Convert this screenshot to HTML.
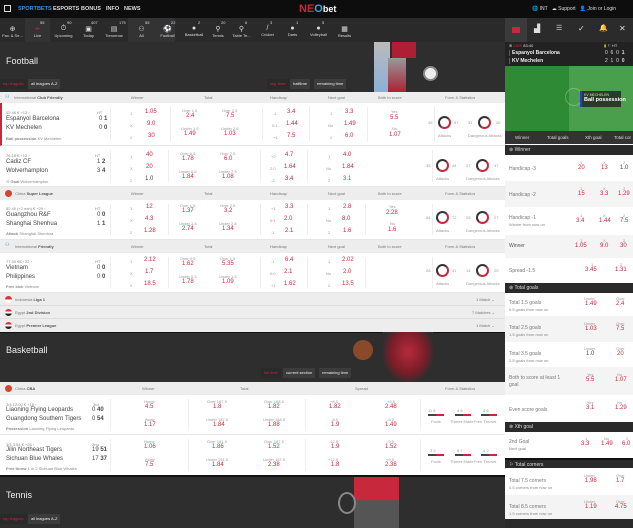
<!DOCTYPE html>
<html><head><meta charset="utf-8"><style>
*{margin:0;padding:0;box-sizing:border-box}
body{width:633px;height:528px;overflow:hidden;background:#fff;font-family:"Liberation Sans",sans-serif;position:relative;color:#444}
.a{position:absolute;white-space:nowrap}
.r{color:#c8283c}
.g{color:#999}
.t{font-size:4px;color:#888}
.o{font-size:6px;color:#c8283c}
.l{font-size:4px;color:#999}
.team{font-size:6px;color:#444}
.hdr{position:absolute;left:0;width:505px;height:13px;background:#ededed;font-size:5px;color:#777}
.row{position:absolute;left:0;width:505px;background:#fff;border-bottom:1px solid #e6e6e6}
.vl{position:absolute;top:4px;bottom:4px;width:1px;background:#eee}
.circ{position:absolute;width:13px;height:13px;border-radius:50%;border:2px solid #333;border-right-color:#c8283c;border-bottom-color:#c8283c}
.dark{position:absolute;left:0;width:505px;background:#2e2e2e}
.tab{position:absolute;height:10px;font-size:4px;line-height:10px;padding:0 3px;color:#eee;background:#3c3c3c}
.nav div.i{position:absolute;top:18px;height:24px;font-size:4px;color:#ddd;text-align:center}
.rp{position:absolute;left:505px;width:128px}
.rrow{position:absolute;left:505px;width:128px;font-size:5px;color:#777}
.rh{position:absolute;left:505px;width:128px;height:10px;background:#2a2a2a;color:#ddd;font-size:5px;line-height:10px;padding-left:4px}
.bar{position:absolute;height:2px;width:16px;background:linear-gradient(90deg,#444 50%,#c8283c 50%)}
</style></head><body>

<!-- top bar -->
<div class="a" style="left:0;top:0;width:633px;height:18px;background:#0d0d0d"></div>
<div class="a" style="left:4px;top:5px;width:7px;height:7px;border:1.5px solid #ddd"></div>
<div class="a" style="left:18px;top:6px;font-size:5.5px;font-weight:bold;color:#3a8fd6">SPORTBETS</div>
<div class="a" style="left:53px;top:6px;font-size:5.5px;font-weight:bold;color:#ddd">ESPORTS</div>
<div class="a" style="left:81px;top:6px;font-size:5.5px;font-weight:bold;color:#ddd">BONUS</div>
<div class="a" style="left:106px;top:6px;font-size:5.5px;font-weight:bold;color:#ddd">INFO</div>
<div class="a" style="left:124px;top:6px;font-size:5.5px;font-weight:bold;color:#ddd">NEWS</div>
<div class="a" style="left:299px;top:3px;font-size:11px;font-weight:bold;color:#c8283c">NE<span style="color:#3aa6e0">O</span><span style="color:#fff;font-size:9px">bet</span></div>
<div class="a" style="left:532px;top:6px;font-size:5px;color:#ddd">🌐 INT &nbsp; ☁ Support &nbsp; 👤 Join or Login</div>

<!-- nav -->
<div class="a" style="left:0;top:18px;width:505px;height:24px;background:#2a2a2a"></div>
<div class="a" style="left:25px;top:18px;width:25px;height:24px;background:#333"></div>
<div class="a" style="left:155px;top:18px;width:20px;height:24px;background:#333"></div>
<div class="a" style="left:128px;top:18px;width:27px;height:24px;background:#333"></div>
<div class="nav">
<div class="i" style="left:0;width:25px"><div style="font-size:7px;margin-top:7px">⊕</div>Fav. &amp; Se...</div>
<div class="i" style="left:25px;width:25px"><div style="font-size:6px;margin-top:8px;color:#c8283c">⟛</div>Live<span class="a" style="left:15px;top:2px">55</span></div>
<div class="i" style="left:50px;width:27px"><div style="font-size:7px;margin-top:7px">⏱</div>Upcoming<span class="a" style="left:17px;top:2px">90</span></div>
<div class="i" style="left:77px;width:23px"><div style="font-size:7px;margin-top:7px">▣</div>Today<span class="a" style="left:14px;top:2px">407</span></div>
<div class="i" style="left:100px;width:28px"><div style="font-size:7px;margin-top:7px">▤</div>Tomorrow<span class="a" style="left:19px;top:2px">175</span></div>
<div class="i" style="left:128px;width:27px"><div style="font-size:7px;margin-top:7px">⚇</div>All<span class="a" style="left:17px;top:2px">55</span></div>
<div class="i" style="left:155px;width:25px"><div style="font-size:7px;margin-top:7px;color:#c8283c">⚽</div>Football<span class="a" style="left:16px;top:2px">22</span></div>
<div class="i" style="left:180px;width:28px"><div style="font-size:7px;margin-top:7px">●</div>Basketball<span class="a" style="left:18px;top:2px">2</span></div>
<div class="i" style="left:208px;width:20px"><div style="font-size:7px;margin-top:7px">⚲</div>Tennis<span class="a" style="left:13px;top:2px">20</span></div>
<div class="i" style="left:228px;width:27px"><div style="font-size:7px;margin-top:7px">⚲</div>Table Te...<span class="a" style="left:17px;top:2px">6</span></div>
<div class="i" style="left:255px;width:25px"><div style="font-size:7px;margin-top:7px">/</div>Cricket<span class="a" style="left:15px;top:2px">3</span></div>
<div class="i" style="left:280px;width:25px"><div style="font-size:7px;margin-top:7px">●</div>Darts<span class="a" style="left:16px;top:2px">1</span></div>
<div class="i" style="left:305px;width:27px"><div style="font-size:7px;margin-top:7px">●</div>Volleyball<span class="a" style="left:17px;top:2px">5</span></div>
<div class="i" style="left:332px;width:25px"><div style="font-size:7px;margin-top:7px">▦</div>Results</div>
</div>

<!-- Football header -->
<div class="dark" style="top:42px;height:50px"></div>
<div class="a" style="left:374px;top:42px;width:16px;height:50px;background:linear-gradient(#bbb,#8ab0d8)"></div>
<div class="a" style="left:392px;top:42px;width:24px;height:16px;background:#b01e35"></div>
<div class="a" style="left:388px;top:58px;width:18px;height:34px;background:linear-gradient(#999,#aa2233)"></div>
<div class="a" style="left:423px;top:66px;width:15px;height:15px;border-radius:50%;background:#eee;border:2px solid #888"></div>
<div class="a" style="left:6px;top:56px;font-size:9px;color:#eee">Football</div>
<div class="tab" style="left:0;top:79px;color:#c8283c;background:#2a2a2a">top leagues</div>
<div class="tab" style="left:28px;top:79px">all leagues A-Z</div>
<div class="tab" style="left:267px;top:79px;color:#c8283c;background:#2a2a2a">reg. time</div>
<div class="tab" style="left:290px;top:79px">halftime</div>
<div class="tab" style="left:314px;top:79px">remaining time</div>

<!-- league header 1 -->
<div class="hdr" style="top:92px;height:11px">
<span class="a" style="left:5px;top:2px;color:#3a8fd6">⚇</span>
<span class="a" style="left:14px;top:3px;font-size:4px">International <b style="color:#555">Club Friendly</b></span>
<span class="a" style="left:131px;top:3px;font-size:4px">Winner</span>
<span class="a" style="left:204px;top:3px;font-size:4px">Total</span>
<span class="a" style="left:270px;top:3px;font-size:4px">Handicap</span>
<span class="a" style="left:328px;top:3px;font-size:4px">Next goal</span>
<span class="a" style="left:378px;top:3px;font-size:4px">Both to score</span>
<span class="a" style="left:445px;top:3px;font-size:4px">Form &amp; Statistics</span>
</div>

<!-- match 1 -->
<div class="row" style="top:103px;height:43px;border-left:2px solid #c8283c">
<span class="a t" style="left:4px;top:7px">02:46 € +13 ›</span>
<span class="a t" style="left:95px;top:7px">HT</span>
<span class="a team" style="left:4px;top:13px">Espanyol Barcelona</span><span class="a team" style="left:97px;top:13px">0 <b>1</b></span>
<span class="a team" style="left:4px;top:22px">KV Mechelen</span><span class="a team" style="left:97px;top:22px">0 <b>0</b></span>
<span class="a t" style="left:4px;top:33px"><b>Ball possession</b> KV Mechelen</span>
<div class="vl" style="left:108px"></div><div class="vl" style="left:168px"></div><div class="vl" style="left:260px"></div><div class="vl" style="left:307px"></div><div class="vl" style="left:365px"></div><div class="vl" style="left:432px"></div>
<span class="a l" style="left:128px;top:8px">1</span><span class="a o" style="left:143px;top:6px">1.05</span>
<span class="a l" style="left:128px;top:20px">X</span><span class="a o" style="left:145px;top:18px">9.0</span>
<span class="a l" style="left:128px;top:32px">2</span><span class="a o" style="left:146px;top:30px">30</span>
<span class="a l" style="left:180px;top:5px">Over 1.5</span><span class="a o" style="left:184px;top:10px">2.4</span>
<span class="a l" style="left:220px;top:5px">Over 2.5</span><span class="a o" style="left:224px;top:10px">7.5</span>
<span class="a l" style="left:179px;top:23px">Under 1.5</span><span class="a o" style="left:182px;top:28px">1.49</span>
<span class="a l" style="left:219px;top:23px">Under 2.5</span><span class="a o" style="left:222px;top:28px">1.03</span>
<span class="a l" style="left:271px;top:8px">-1</span><span class="a o" style="left:285px;top:6px">3.4</span>
<span class="a l" style="left:270px;top:20px">0:1</span><span class="a o" style="left:284px;top:18px">1.44</span>
<span class="a l" style="left:271px;top:32px">+1</span><span class="a o" style="left:285px;top:30px">7.5</span>
<span class="a l" style="left:328px;top:8px">1</span><span class="a o" style="left:343px;top:6px">3.3</span>
<span class="a l" style="left:326px;top:20px">No</span><span class="a o" style="left:342px;top:18px">1.49</span>
<span class="a l" style="left:328px;top:32px">2</span><span class="a o" style="left:343px;top:30px">6.0</span>
<span class="a l" style="left:389px;top:6px">Yes</span><span class="a o" style="left:388px;top:12px">5.5</span>
<span class="a l" style="left:390px;top:23px">No</span><span class="a o" style="left:387px;top:29px">1.07</span>
<span class="a l" style="left:426px;top:17px">49</span><div class="circ" style="left:436px;top:13px"></div><span class="a l" style="left:452px;top:17px">57</span><span class="a l" style="left:436px;top:30px">Attacks</span>
<span class="a l" style="left:466px;top:17px">31</span><div class="circ" style="left:476px;top:13px"></div><span class="a l" style="left:494px;top:17px">26</span><span class="a l" style="left:466px;top:30px">Dangerous Attacks</span>
</div>

<!-- match 2 -->
<div class="row" style="top:146px;height:41px">
<span class="a t" style="left:6px;top:7px">76:18 € +12 ›</span>
<span class="a t" style="left:95px;top:7px">HT</span>
<span class="a team" style="left:6px;top:13px">Cadiz CF</span><span class="a team" style="left:97px;top:13px">1 <b>2</b></span>
<span class="a team" style="left:6px;top:22px">Wolverhampton</span><span class="a team" style="left:97px;top:22px">3 <b>4</b></span>
<span class="a t" style="left:6px;top:33px">⊙ <b>Goal</b> Wolverhampton</span>
<div class="vl" style="left:110px"></div><div class="vl" style="left:168px"></div><div class="vl" style="left:260px"></div><div class="vl" style="left:307px"></div><div class="vl" style="left:432px"></div>
<span class="a l" style="left:130px;top:8px">1</span><span class="a o" style="left:146px;top:6px">40</span>
<span class="a l" style="left:130px;top:20px">X</span><span class="a o" style="left:146px;top:18px">20</span>
<span class="a l" style="left:130px;top:32px">2</span><span class="a" style="left:145px;top:30px;font-size:6px;color:#444">1.0</span>
<span class="a l" style="left:180px;top:5px">Over 6.5</span><span class="a o" style="left:182px;top:10px">1.78</span>
<span class="a l" style="left:220px;top:5px">Over 7.5</span><span class="a o" style="left:224px;top:10px">6.0</span>
<span class="a l" style="left:179px;top:23px">Under 6.5</span><span class="a o" style="left:182px;top:28px">1.84</span>
<span class="a l" style="left:219px;top:23px">Under 7.5</span><span class="a o" style="left:222px;top:28px">1.08</span>
<span class="a l" style="left:271px;top:8px">+2</span><span class="a o" style="left:285px;top:6px">4.7</span>
<span class="a l" style="left:270px;top:20px">2:0</span><span class="a o" style="left:284px;top:18px">1.64</span>
<span class="a l" style="left:271px;top:32px">-2</span><span class="a o" style="left:285px;top:30px">3.4</span>
<span class="a l" style="left:328px;top:8px">1</span><span class="a o" style="left:343px;top:6px">4.0</span>
<span class="a l" style="left:326px;top:20px">No</span><span class="a o" style="left:342px;top:18px">1.84</span>
<span class="a l" style="left:328px;top:32px">2</span><span class="a o" style="left:343px;top:30px">3.1</span>
<span class="a l" style="left:426px;top:17px">35</span><div class="circ" style="left:436px;top:13px"></div><span class="a l" style="left:452px;top:17px">44</span><span class="a l" style="left:436px;top:30px">Attacks</span>
<span class="a l" style="left:466px;top:17px">27</span><div class="circ" style="left:476px;top:13px"></div><span class="a l" style="left:494px;top:17px">37</span><span class="a l" style="left:466px;top:30px">Dangerous Attacks</span>
</div>

<!-- league China -->
<div class="hdr" style="top:187px">
<span class="a" style="left:5px;top:3px;width:7px;height:7px;border-radius:50%;background:#d9432a"></span>
<span class="a" style="left:15px;top:4px;font-size:4px">China <b style="color:#555">Super League</b></span>
<span class="a" style="left:131px;top:4px;font-size:4px">Winner</span>
<span class="a" style="left:204px;top:4px;font-size:4px">Total</span>
<span class="a" style="left:270px;top:4px;font-size:4px">Handicap</span>
<span class="a" style="left:328px;top:4px;font-size:4px">Next goal</span>
<span class="a" style="left:378px;top:4px;font-size:4px">Both to score</span>
<span class="a" style="left:445px;top:4px;font-size:4px">Form &amp; Statistics</span>
</div>

<!-- match 3 -->
<div class="row" style="top:200px;height:40px">
<span class="a t" style="left:6px;top:6px">52:40 (+2 min) € +29 ›</span>
<span class="a t" style="left:95px;top:6px">HT</span>
<span class="a team" style="left:6px;top:12px">Guangzhou R&amp;F</span><span class="a team" style="left:97px;top:12px">0 <b>0</b></span>
<span class="a team" style="left:6px;top:21px">Shanghai Shenhua</span><span class="a team" style="left:97px;top:21px">1 <b>1</b></span>
<span class="a t" style="left:6px;top:31px"><b>Attack</b> Shanghai Shenhua</span>
<div class="vl" style="left:110px"></div><div class="vl" style="left:168px"></div><div class="vl" style="left:260px"></div><div class="vl" style="left:307px"></div><div class="vl" style="left:365px"></div><div class="vl" style="left:432px"></div>
<span class="a l" style="left:130px;top:6px">1</span><span class="a o" style="left:146px;top:4px">12</span>
<span class="a l" style="left:130px;top:18px">X</span><span class="a o" style="left:145px;top:16px">4.3</span>
<span class="a l" style="left:130px;top:30px">2</span><span class="a o" style="left:144px;top:28px">1.28</span>
<span class="a l" style="left:180px;top:3px">Over 1.5</span><span class="a o" style="left:182px;top:8px">1.37</span>
<span class="a l" style="left:220px;top:3px">Over 2.5</span><span class="a o" style="left:224px;top:8px">3.2</span>
<span class="a l" style="left:179px;top:21px">Under 1.5</span><span class="a o" style="left:182px;top:26px">2.74</span>
<span class="a l" style="left:219px;top:21px">Under 2.5</span><span class="a o" style="left:222px;top:26px">1.34</span>
<span class="a l" style="left:271px;top:6px">+1</span><span class="a o" style="left:285px;top:4px">3.3</span>
<span class="a l" style="left:270px;top:18px">0:1</span><span class="a o" style="left:284px;top:16px">2.0</span>
<span class="a l" style="left:271px;top:30px">-1</span><span class="a o" style="left:285px;top:28px">2.1</span>
<span class="a l" style="left:328px;top:6px">1</span><span class="a o" style="left:343px;top:4px">2.8</span>
<span class="a l" style="left:326px;top:18px">No</span><span class="a o" style="left:342px;top:16px">8.0</span>
<span class="a l" style="left:328px;top:30px">2</span><span class="a o" style="left:343px;top:28px">1.6</span>
<span class="a l" style="left:389px;top:4px">Yes</span><span class="a o" style="left:386px;top:10px">2.28</span>
<span class="a l" style="left:390px;top:21px">No</span><span class="a o" style="left:388px;top:27px">1.6</span>
<span class="a l" style="left:426px;top:15px">64</span><div class="circ" style="left:436px;top:11px"></div><span class="a l" style="left:452px;top:15px">72</span><span class="a l" style="left:436px;top:28px">Attacks</span>
<span class="a l" style="left:466px;top:15px">26</span><div class="circ" style="left:476px;top:11px"></div><span class="a l" style="left:494px;top:15px">27</span><span class="a l" style="left:466px;top:28px">Dangerous Attacks</span>
</div>

<!-- league Intl friendly -->
<div class="hdr" style="top:240px">
<span class="a" style="left:5px;top:2px;color:#3a8fd6">⚇</span>
<span class="a" style="left:15px;top:4px;font-size:4px">International <b style="color:#555">Friendly</b></span>
<span class="a" style="left:131px;top:4px;font-size:4px">Winner</span>
<span class="a" style="left:204px;top:4px;font-size:4px">Total</span>
<span class="a" style="left:270px;top:4px;font-size:4px">Handicap</span>
<span class="a" style="left:328px;top:4px;font-size:4px">Next goal</span>
<span class="a" style="left:378px;top:4px;font-size:4px">Both to score</span>
<span class="a" style="left:445px;top:4px;font-size:4px">Form &amp; Statistics</span>
</div>

<!-- match 4 -->
<div class="row" style="top:253px;height:40px">
<span class="a t" style="left:6px;top:6px">77:39 €€ +22 ›</span>
<span class="a t" style="left:95px;top:6px">HT</span>
<span class="a team" style="left:6px;top:12px">Vietnam</span><span class="a team" style="left:97px;top:12px">0 <b>0</b></span>
<span class="a team" style="left:6px;top:21px">Philippines</span><span class="a team" style="left:97px;top:21px">0 <b>0</b></span>
<span class="a t" style="left:6px;top:31px"><b>Free kick</b> Vietnam</span>
<div class="vl" style="left:110px"></div><div class="vl" style="left:168px"></div><div class="vl" style="left:260px"></div><div class="vl" style="left:307px"></div><div class="vl" style="left:365px"></div><div class="vl" style="left:432px"></div>
<span class="a l" style="left:130px;top:6px">1</span><span class="a o" style="left:144px;top:4px">2.12</span>
<span class="a l" style="left:130px;top:18px">X</span><span class="a o" style="left:145px;top:16px">1.7</span>
<span class="a l" style="left:130px;top:30px">2</span><span class="a o" style="left:144px;top:28px">18.5</span>
<span class="a l" style="left:180px;top:3px">Over 0.5</span><span class="a o" style="left:182px;top:8px">1.62</span>
<span class="a l" style="left:220px;top:3px">Over 1.5</span><span class="a o" style="left:222px;top:8px">5.35</span>
<span class="a l" style="left:179px;top:21px">Under 0.5</span><span class="a o" style="left:182px;top:26px">1.78</span>
<span class="a l" style="left:219px;top:21px">Under 1.5</span><span class="a o" style="left:222px;top:26px">1.09</span>
<span class="a l" style="left:271px;top:6px">-1</span><span class="a o" style="left:285px;top:4px">6.4</span>
<span class="a l" style="left:270px;top:18px">0:0</span><span class="a o" style="left:284px;top:16px">2.1</span>
<span class="a l" style="left:271px;top:30px">+1</span><span class="a o" style="left:284px;top:28px">1.62</span>
<span class="a l" style="left:328px;top:6px">1</span><span class="a o" style="left:342px;top:4px">2.02</span>
<span class="a l" style="left:326px;top:18px">No</span><span class="a o" style="left:343px;top:16px">2.0</span>
<span class="a l" style="left:328px;top:30px">2</span><span class="a o" style="left:342px;top:28px">13.5</span>
<span class="a l" style="left:426px;top:15px">26</span><div class="circ" style="left:436px;top:11px"></div><span class="a l" style="left:452px;top:15px">31</span><span class="a l" style="left:436px;top:28px">Attacks</span>
<span class="a l" style="left:466px;top:15px">14</span><div class="circ" style="left:476px;top:11px"></div><span class="a l" style="left:494px;top:15px">20</span><span class="a l" style="left:466px;top:28px">Dangerous Attacks</span>
</div>

<!-- collapsed leagues -->
<div class="hdr" style="top:293px;border-bottom:1px solid #ddd"><span class="a" style="left:5px;top:3px;width:7px;height:7px;border-radius:50%;background:linear-gradient(#d33 50%,#fff 50%)"></span><span class="a" style="left:15px;top:4px;font-size:4px">Indonesia <b style="color:#555">Liga 1</b></span><span class="a" style="left:476px;top:4px;font-size:4px">1 Match ⌄</span></div>
<div class="hdr" style="top:306px;border-bottom:1px solid #ddd"><span class="a" style="left:5px;top:3px;width:7px;height:7px;border-radius:50%;background:linear-gradient(#d33 33%,#fff 33%,#fff 66%,#222 66%)"></span><span class="a" style="left:15px;top:4px;font-size:4px">Egypt <b style="color:#555">2nd Division</b></span><span class="a" style="left:472px;top:4px;font-size:4px">7 Matches ⌄</span></div>
<div class="hdr" style="top:319px"><span class="a" style="left:5px;top:3px;width:7px;height:7px;border-radius:50%;background:linear-gradient(#d33 33%,#fff 33%,#fff 66%,#222 66%)"></span><span class="a" style="left:15px;top:4px;font-size:4px">Egypt <b style="color:#555">Premier League</b></span><span class="a" style="left:476px;top:4px;font-size:4px">1 Match ⌄</span></div>

<!-- Basketball header -->
<div class="dark" style="top:332px;height:50px;border-top:1px solid #111"></div>
<div class="a" style="left:383px;top:332px;width:50px;height:50px;background:radial-gradient(ellipse at 50% 40%,#b52a3a 0%,#7a1d28 50%,#2e2e2e 75%)"></div>
<div class="a" style="left:353px;top:340px;width:20px;height:20px;border-radius:50%;background:#8a4a2a"></div>
<div class="a" style="left:6px;top:345px;font-size:9px;color:#eee">Basketball</div>
<div class="tab" style="left:261px;top:368px;color:#c8283c;background:#2a2a2a">full time</div>
<div class="tab" style="left:283px;top:368px">current section</div>
<div class="tab" style="left:319px;top:368px">remaining time</div>

<div class="hdr" style="top:382px">
<span class="a" style="left:5px;top:3px;width:7px;height:7px;border-radius:50%;background:#d9432a"></span>
<span class="a" style="left:15px;top:4px;font-size:4px">China <b style="color:#555">CBA</b></span>
<span class="a" style="left:142px;top:4px;font-size:4px">Winner</span>
<span class="a" style="left:240px;top:4px;font-size:4px">Total</span>
<span class="a" style="left:355px;top:4px;font-size:4px">Spread</span>
<span class="a" style="left:445px;top:4px;font-size:4px">Form &amp; Statistics</span>
</div>

<div class="row" style="top:395px;height:40px">
<span class="a t" style="left:6px;top:7px">3/4 12:00 € +18 ›</span><span class="a t" style="left:93px;top:7px">3rd</span>
<span class="a team" style="left:6px;top:12px">Liaoning Flying Leopards</span><span class="a team" style="left:92px;top:12px">0 <b>40</b></span>
<span class="a team" style="left:6px;top:21px">Guangdong Southern Tigers</span><span class="a team" style="left:92px;top:21px">0 <b>54</b></span>
<span class="a t" style="left:6px;top:31px"><b>Possession</b> Liaoning Flying Leopards</span>
<div class="vl" style="left:110px"></div><div class="vl" style="left:188px"></div><div class="vl" style="left:305px"></div><div class="vl" style="left:420px"></div>
<span class="a l" style="left:144px;top:4px">Home</span><span class="a o" style="left:145px;top:9px">4.5</span>
<span class="a l" style="left:145px;top:22px">Away</span><span class="a o" style="left:144px;top:27px">1.17</span>
<span class="a l" style="left:207px;top:4px">Over 187.5</span><span class="a o" style="left:213px;top:9px">1.8</span>
<span class="a l" style="left:264px;top:4px">Over 188.5</span><span class="a o" style="left:268px;top:9px">1.82</span>
<span class="a l" style="left:206px;top:22px">Under 187.5</span><span class="a o" style="left:213px;top:27px">1.84</span>
<span class="a l" style="left:263px;top:22px">Under 188.5</span><span class="a o" style="left:268px;top:27px">1.88</span>
<span class="a l" style="left:330px;top:4px">+8.5</span><span class="a o" style="left:329px;top:9px">1.82</span>
<span class="a l" style="left:387px;top:4px">+5.5</span><span class="a o" style="left:385px;top:9px">2.48</span>
<span class="a l" style="left:331px;top:22px">-8.5</span><span class="a o" style="left:331px;top:27px">1.9</span>
<span class="a l" style="left:387px;top:22px">-5.5</span><span class="a o" style="left:385px;top:27px">1.49</span>
<span class="a l" style="left:428px;top:13px">11 8</span><div class="bar" style="left:428px;top:19px"></div><span class="a l" style="left:431px;top:24px">Fouls</span>
<span class="a l" style="left:457px;top:13px">4 5</span><div class="bar" style="left:455px;top:19px"></div><span class="a l" style="left:450px;top:24px">Threes Made</span>
<span class="a l" style="left:483px;top:13px">8 6</span><div class="bar" style="left:481px;top:19px"></div><span class="a l" style="left:474px;top:24px">Free Throws</span>
</div>

<div class="row" style="top:435px;height:40px;border-bottom:none">
<span class="a t" style="left:6px;top:7px">3/4 3:54 € +26 ›</span><span class="a t" style="left:92px;top:7px">2nd</span>
<span class="a team" style="left:6px;top:12px">Jilin Northeast Tigers</span><span class="a team" style="left:92px;top:12px">19 <b>51</b></span>
<span class="a team" style="left:6px;top:21px">Sichuan Blue Whales</span><span class="a team" style="left:92px;top:21px">17 <b>37</b></span>
<span class="a t" style="left:6px;top:31px"><b>Free throw</b> 1 of 2 Sichuan Blue Whales</span>
<div class="vl" style="left:110px"></div><div class="vl" style="left:188px"></div><div class="vl" style="left:305px"></div><div class="vl" style="left:420px"></div>
<span class="a l" style="left:144px;top:4px">Home</span><span class="a o" style="left:144px;top:9px">1.06</span>
<span class="a l" style="left:145px;top:22px">Away</span><span class="a o" style="left:145px;top:27px">7.5</span>
<span class="a l" style="left:207px;top:4px">Over 191.5</span><span class="a o" style="left:212px;top:9px">1.86</span>
<span class="a l" style="left:264px;top:4px">Over 187.5</span><span class="a o" style="left:268px;top:9px">1.52</span>
<span class="a l" style="left:206px;top:22px">Under 191.5</span><span class="a o" style="left:212px;top:27px">1.84</span>
<span class="a l" style="left:263px;top:22px">Under 187.5</span><span class="a o" style="left:268px;top:27px">2.38</span>
<span class="a l" style="left:329px;top:4px">-12.5</span><span class="a o" style="left:331px;top:9px">1.9</span>
<span class="a l" style="left:387px;top:4px">-9.5</span><span class="a o" style="left:385px;top:9px">1.52</span>
<span class="a l" style="left:328px;top:22px">+12.5</span><span class="a o" style="left:331px;top:27px">1.8</span>
<span class="a l" style="left:386px;top:22px">+9.5</span><span class="a o" style="left:385px;top:27px">2.38</span>
<span class="a l" style="left:430px;top:13px">3 2</span><div class="bar" style="left:428px;top:19px"></div><span class="a l" style="left:431px;top:24px">Fouls</span>
<span class="a l" style="left:457px;top:13px">6 7</span><div class="bar" style="left:455px;top:19px"></div><span class="a l" style="left:450px;top:24px">Threes Made</span>
<span class="a l" style="left:483px;top:13px">4 2</span><div class="bar" style="left:481px;top:19px"></div><span class="a l" style="left:474px;top:24px">Free Throws</span>
</div>

<!-- Tennis -->
<div class="dark" style="top:475px;height:53px;border-top:2px solid #111"></div>
<div class="a" style="left:354px;top:477px;width:45px;height:51px;background:linear-gradient(#c8283c 0,#c8283c 45%,#555 46%)"></div>
<div class="a" style="left:338px;top:492px;width:18px;height:22px;border-radius:50%;border:2px solid #888"></div>
<div class="a" style="left:6px;top:490px;font-size:9px;color:#eee">Tennis</div>
<div class="tab" style="left:0;top:514px;color:#c8283c;background:#2a2a2a">top leagues</div>
<div class="tab" style="left:28px;top:514px">all leagues A-Z</div>

<!-- right panel -->
<div class="rp" style="top:18px;height:510px;background:#fff;border-left:1px solid #ccc"></div>
<div class="rp" style="top:18px;height:24px;background:#2b2b2b"></div>
<div class="rp" style="top:18px;height:24px;width:22px;background:#3a3a3a"></div>
<div class="a" style="left:512px;top:27px;width:8px;height:6px;background:#c8283c"></div>
<div class="a" style="left:534px;top:24px;font-size:8px;color:#ddd">▟</div>
<div class="a" style="left:556px;top:24px;font-size:7px;color:#ddd">☰</div>
<div class="a" style="left:578px;top:24px;font-size:8px;color:#ddd">✓</div>
<div class="a" style="left:599px;top:24px;font-size:7px;color:#ddd">🔔</div>
<div class="a" style="left:619px;top:24px;font-size:8px;color:#ddd">✕</div>
<div class="rp" style="top:42px;height:24px;background:#222"></div>
<div class="a" style="left:509px;top:43px;font-size:4px;color:#ddd">⊕ <span class="r">LIVE</span> 83:40</div>
<div class="a" style="left:509px;top:50px;font-size:5px;font-weight:bold;color:#eee;border-left:1px solid #c8283c;padding-left:2px">Espanyol Barcelona</div>
<div class="a" style="left:509px;top:58px;font-size:5px;font-weight:bold;color:#eee;border-left:1px solid #3a5ad6;padding-left:2px">KV Mechelen</div>
<div class="a" style="left:604px;top:43px;font-size:4px;color:#ddd"><span style="color:#e8c020">▮</span> ⚐ HT</div>
<div class="a" style="left:605px;top:50px;font-size:5px;color:#ddd">0 &nbsp;6 &nbsp;0 &nbsp;<b>1</b></div>
<div class="a" style="left:605px;top:58px;font-size:5px;color:#ddd">2 &nbsp;1 &nbsp;0 &nbsp;<b>0</b></div>
<div class="rp" style="top:66px;height:65px;background:linear-gradient(90deg,#2f8a35 0,#2f8a35 50%,#4a9f4c 50%)"></div>
<div class="a" style="left:565px;top:88px;width:18px;height:18px;border-radius:50%;border:1px solid rgba(255,255,255,.25)"></div>
<div class="a" style="left:580px;top:91px;width:41px;height:16px;background:#2a3a2a;border-left:2px solid #2a3ad6;padding-left:2px">
<div style="font-size:3.5px;color:#ddd;margin-top:2px">KV MECHELEN</div><div style="font-size:5.5px;font-weight:bold;color:#fff">Ball possession</div></div>
<div class="rp" style="top:131px;height:13px;background:#333"></div>
<div class="a" style="left:515px;top:135px;font-size:4.5px;color:#ddd">Winner</div>
<div class="a" style="left:547px;top:135px;font-size:4.5px;color:#ddd">Total goals</div>
<div class="a" style="left:585px;top:135px;font-size:4.5px;color:#ddd">Xth goal</div>
<div class="a" style="left:614px;top:135px;font-size:4.5px;color:#ddd">Total cor</div>
<div class="rh" style="top:145px">⊛ Winner</div>

<div class="rrow" style="top:155px;height:26px;background:#fff"><span class="a" style="left:4px;top:11px">Handicap -3</span><span class="a l" style="left:75px;top:5px">1</span><span class="a o" style="left:73px;top:10px">20</span><span class="a l" style="left:98px;top:5px">X</span><span class="a o" style="left:96px;top:10px">13</span><span class="a l" style="left:118px;top:5px">2</span><span class="a" style="left:115px;top:10px;font-size:6px;color:#444">1.0</span></div>
<div class="rrow" style="top:181px;height:26px;background:#f4f4f4"><span class="a" style="left:4px;top:11px">Handicap -2</span><span class="a l" style="left:75px;top:5px">1</span><span class="a o" style="left:73px;top:10px">15</span><span class="a l" style="left:98px;top:5px">X</span><span class="a o" style="left:95px;top:10px">3.3</span><span class="a l" style="left:118px;top:5px">2</span><span class="a o" style="left:113px;top:10px">1.29</span></div>
<div class="rrow" style="top:207px;height:28px;background:#fff"><span class="a" style="left:4px;top:8px">Handicap -1</span><span class="a t" style="left:4px;top:15px">Winner from now on</span><span class="a l" style="left:75px;top:6px">1</span><span class="a o" style="left:71px;top:11px">3.4</span><span class="a l" style="left:98px;top:6px">X</span><span class="a o" style="left:94px;top:11px">1.44</span><span class="a l" style="left:118px;top:6px">2</span><span class="a o" style="left:115px;top:11px">7.5</span></div>
<div class="rrow" style="top:235px;height:23px;background:#f4f4f4"><span class="a" style="left:4px;top:8px;color:#555">Winner</span><span class="a l" style="left:75px;top:3px">1</span><span class="a o" style="left:70px;top:8px">1.05</span><span class="a l" style="left:98px;top:3px">X</span><span class="a o" style="left:95px;top:8px">9.0</span><span class="a l" style="left:118px;top:3px">2</span><span class="a o" style="left:115px;top:8px">30</span></div>
<div class="rrow" style="top:258px;height:25px;background:#fff"><span class="a" style="left:4px;top:10px">Spread -1.5</span><span class="a l" style="left:86px;top:4px">1</span><span class="a o" style="left:80px;top:9px">3.45</span><span class="a l" style="left:115px;top:4px">2</span><span class="a o" style="left:110px;top:9px">1.31</span></div>

<div class="rh" style="top:283px">⊛ Total goals</div>
<div class="rrow" style="top:293px;height:23px;background:#fff"><span class="a" style="left:4px;top:7px">Total 1.5 goals</span><span class="a t" style="left:4px;top:14px">0.5 goals from now on</span><span class="a l" style="left:79px;top:3px">Under</span><span class="a o" style="left:80px;top:8px">1.49</span><span class="a l" style="left:111px;top:3px">Over</span><span class="a o" style="left:111px;top:8px">2.4</span></div>
<div class="rrow" style="top:316px;height:26px;background:#f4f4f4"><span class="a" style="left:4px;top:9px">Total 2.5 goals</span><span class="a t" style="left:4px;top:16px">1.5 goals from now on</span><span class="a l" style="left:79px;top:5px">Under</span><span class="a o" style="left:80px;top:10px">1.03</span><span class="a l" style="left:111px;top:5px">Over</span><span class="a o" style="left:111px;top:10px">7.5</span></div>
<div class="rrow" style="top:342px;height:25px;background:#fff"><span class="a" style="left:4px;top:9px">Total 3.5 goals</span><span class="a t" style="left:4px;top:16px">2.5 goals from now on</span><span class="a l" style="left:79px;top:4px">Under</span><span class="a" style="left:81px;top:9px;font-size:6px;color:#444">1.0</span><span class="a l" style="left:111px;top:4px">Over</span><span class="a o" style="left:112px;top:9px">20</span></div>
<div class="rrow" style="top:367px;height:28px;background:#f4f4f4"><span class="a" style="left:4px;top:8px">Both to score at least 1</span><span class="a" style="left:4px;top:15px">goal</span><span class="a l" style="left:82px;top:5px">Yes</span><span class="a o" style="left:81px;top:10px">5.5</span><span class="a l" style="left:112px;top:5px">No</span><span class="a o" style="left:110px;top:10px">1.07</span></div>
<div class="rrow" style="top:395px;height:27px;background:#fff"><span class="a" style="left:4px;top:12px">Even score goals</span><span class="a l" style="left:82px;top:5px">Yes</span><span class="a o" style="left:81px;top:10px">3.1</span><span class="a l" style="left:112px;top:5px">No</span><span class="a o" style="left:110px;top:10px">1.29</span></div>

<div class="rh" style="top:422px">⊛ Xth goal</div>
<div class="rrow" style="top:432px;height:26px;background:#fff"><span class="a" style="left:4px;top:7px">2nd Goal</span><span class="a t" style="left:4px;top:14px">Next goal</span><span class="a l" style="left:80px;top:4px">1</span><span class="a o" style="left:76px;top:9px">3.3</span><span class="a l" style="left:99px;top:4px">No</span><span class="a o" style="left:96px;top:9px">1.49</span><span class="a l" style="left:121px;top:4px">2</span><span class="a o" style="left:117px;top:9px">6.0</span></div>

<div class="rh" style="top:458px;border-top:2px solid #111">⚐ Total corners</div>
<div class="rrow" style="top:469px;height:26px;background:#fff"><span class="a" style="left:4px;top:9px">Total 7.5 corners</span><span class="a t" style="left:4px;top:16px">0.5 corners from now on</span><span class="a l" style="left:79px;top:4px">Under</span><span class="a o" style="left:80px;top:9px">1.98</span><span class="a l" style="left:111px;top:4px">Over</span><span class="a o" style="left:111px;top:9px">1.7</span></div>
<div class="rrow" style="top:495px;height:24px;background:#f4f4f4"><span class="a" style="left:4px;top:9px">Total 8.5 corners</span><span class="a t" style="left:4px;top:16px">1.5 corners from now on</span><span class="a l" style="left:79px;top:4px">Under</span><span class="a o" style="left:80px;top:9px">1.19</span><span class="a l" style="left:111px;top:4px">Over</span><span class="a o" style="left:110px;top:9px">4.75</span></div>
<div class="rp" style="top:519px;height:9px;background:#2a2a2a"></div>

</body></html>
